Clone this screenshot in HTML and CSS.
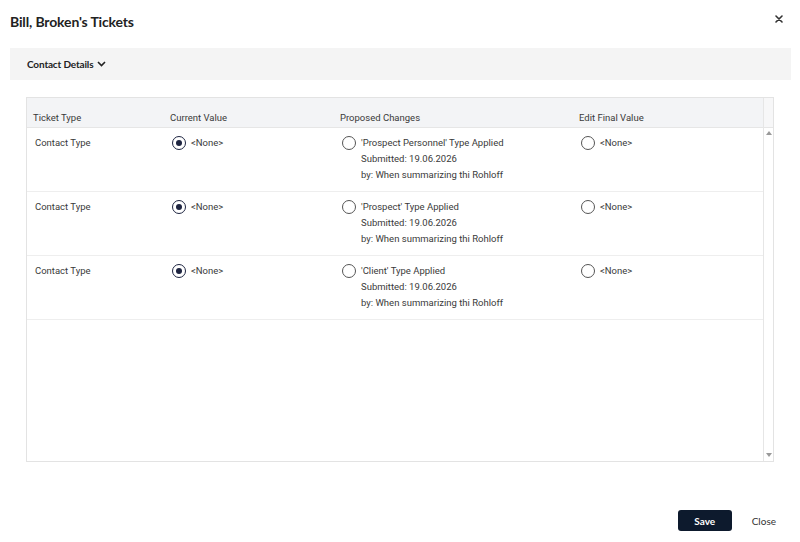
FILE: index.html
```html
<!DOCTYPE html>
<html lang="en">
<head>
    <meta charset="UTF-8">
    <meta name="viewport" content="width=device-width, initial-scale=1.0">
    <title>Bill, Broken's Tickets</title>
    <link rel="stylesheet" href="styles.css">
</head>
<body>

<div class="dialog">
    <div class="dialog-header">
        <h1>Bill, Broken's Tickets</h1>
        <button class="close-x" aria-label="Close">
            <svg width="8" height="8" viewBox="0 0 8 8"><path d="M1 1L7 7M7 1L1 7" stroke="#333" stroke-width="1.6" stroke-linecap="round"/></svg>
        </button>
    </div>

    <div class="section-bar">
        Contact Details
        <svg class="chevron" width="9" height="6" viewBox="0 0 9 6"><path d="M1 1L4.5 4.5L8 1" fill="none" stroke="#222" stroke-width="1.6"/></svg>
    </div>

    <!-- Changes grid with its own scrollbar column -->
    <div class="changes">
        <div class="grid">
            <div class="grid-row grid-head">
                <div class="cell">Ticket Type</div>
                <div class="cell">Current Value</div>
                <div class="cell">Proposed Changes</div>
                <div class="cell">Edit Final Value</div>
            </div>

            <div class="grid-row">
                <div class="cell">Contact Type</div>
                <div class="cell"><label class="option"><span class="radio checked"></span>&lt;None&gt;</label></div>
                <div class="cell">
                    <label class="option"><span class="radio"></span>
                        <span class="lines">'Prospect Personnel' Type Applied<br>Submitted: 19.06.2026<br>by: When summarizing thi Rohloff</span>
                    </label>
                </div>
                <div class="cell"><label class="option"><span class="radio"></span>&lt;None&gt;</label></div>
            </div>

            <div class="grid-row">
                <div class="cell">Contact Type</div>
                <div class="cell"><label class="option"><span class="radio checked"></span>&lt;None&gt;</label></div>
                <div class="cell">
                    <label class="option"><span class="radio"></span>
                        <span class="lines">'Prospect' Type Applied<br>Submitted: 19.06.2026<br>by: When summarizing thi Rohloff</span>
                    </label>
                </div>
                <div class="cell"><label class="option"><span class="radio"></span>&lt;None&gt;</label></div>
            </div>

            <div class="grid-row">
                <div class="cell">Contact Type</div>
                <div class="cell"><label class="option"><span class="radio checked"></span>&lt;None&gt;</label></div>
                <div class="cell">
                    <label class="option"><span class="radio"></span>
                        <span class="lines">'Client' Type Applied<br>Submitted: 19.06.2026<br>by: When summarizing thi Rohloff</span>
                    </label>
                </div>
                <div class="cell"><label class="option"><span class="radio"></span>&lt;None&gt;</label></div>
            </div>
        </div>

        <div class="scrollbar">
            <div class="scroll-head"></div>
            <span class="arrow up"></span>
            <span class="arrow down"></span>
        </div>
    </div>

    <div class="dialog-footer">
        <button class="btn-save">Save</button>
        <button class="btn-close">Close</button>
    </div>
</div>

</body>
</html>
```

FILE: styles.css
```css
body {
    margin: 0;
    background-color: #ffffff;
    font-family: Lato, "Liberation Sans", sans-serif;
    color: #222;
}

.dialog {
    height: 542px;
    display: flex;
    flex-direction: column;
    padding: 0 9px 0 10px;
    box-sizing: border-box;
}

/* Header */
.dialog-header {
    display: flex;
    justify-content: space-between;
    align-items: flex-start;
    height: 48px;
}

.dialog-header h1 {
    margin: 12px 0 0 0;
    font-size: 14px;
    font-weight: 700;
    letter-spacing: -0.15px;
    line-height: 20px;
    color: #222;
}

.close-x {
    margin: 11px 8px 0 0;
    padding: 0;
    border: none;
    background: none;
    cursor: pointer;
}

.section-bar {
    height: 32px;
    display: flex;
    align-items: center;
    padding-left: 17px;
    background-color: #f4f4f4;
    font-size: 10px;
    font-weight: 700;
    letter-spacing: -0.15px;
    color: #222;
}

.chevron {
    margin-left: 4px;
}

/* Changes table */
.changes {
    margin: 17px 17px 0 16px;
    height: 365px;
    display: flex;
    border: 1px solid #e3e3e3;
    box-sizing: border-box;
    font-family: Roboto, "Liberation Sans", sans-serif;
    font-size: 9.5px;
    color: #3a3a3a;
}

.grid {
    flex: 1;
}

.grid-row {
    display: grid;
    grid-template-columns: 137px 170px 239px 1fr;
    height: 64px;
    box-sizing: border-box;
    border-bottom: 1px solid #eeeeee;
}

.grid-head {
    height: 30px;
    background-color: #f3f4f6;
    border-bottom: 1px solid #e6e6e6;
}

.grid-head .cell {
    padding: 13px 0 0 6px;
    line-height: 14px;
}

.cell {
    padding: 7px 0 0 8px;
    line-height: 16px;
}

.option {
    display: flex;
    align-items: flex-start;
    gap: 5px;
}

.radio {
    width: 14px;
    height: 14px;
    border: 1.2px solid #555;
    border-radius: 50%;
    box-sizing: border-box;
    flex-shrink: 0;
    position: relative;
    top: 1px;
}

.radio.checked {
    border-color: #1d2440;
    border-width: 1.5px;
}

.radio.checked::after {
    content: "";
    position: absolute;
    left: 2.5px;
    top: 2.5px;
    width: 6px;
    height: 6px;
    border-radius: 50%;
    background-color: #1d2440;
}

.lines {
    display: block;
}

/* Scrollbar column */
.scrollbar {
    width: 9px;
    border-left: 1px solid #e6e6e6;
    position: relative;
}

.scroll-head {
    height: 29px;
    background-color: #f7f7f8;
    border-bottom: 1px solid #e6e6e6;
}

.arrow {
    position: absolute;
    left: 2px;
    width: 0;
    height: 0;
    border-left: 3px solid transparent;
    border-right: 3px solid transparent;
}

.arrow.up {
    top: 33px;
    border-bottom: 4px solid #999;
}

.arrow.down {
    bottom: 4px;
    border-top: 4px solid #999;
}

/* Footer buttons */
.dialog-footer {
    margin-top: auto;
    margin-bottom: 11px;
    display: flex;
    justify-content: flex-end;
    align-items: center;
    gap: 20px;
    padding-right: 15px;
}

.btn-save {
    width: 54px;
    height: 21px;
    border: none;
    border-radius: 3px;
    background-color: #0d1a2d;
    color: #ffffff;
    font-family: Lato, "Liberation Sans", sans-serif;
    font-size: 10px;
    font-weight: 700;
    cursor: pointer;
}

.btn-close {
    padding: 0;
    border: none;
    background: none;
    color: #333;
    font-family: Lato, "Liberation Sans", sans-serif;
    font-size: 10px;
    cursor: pointer;
}
```
